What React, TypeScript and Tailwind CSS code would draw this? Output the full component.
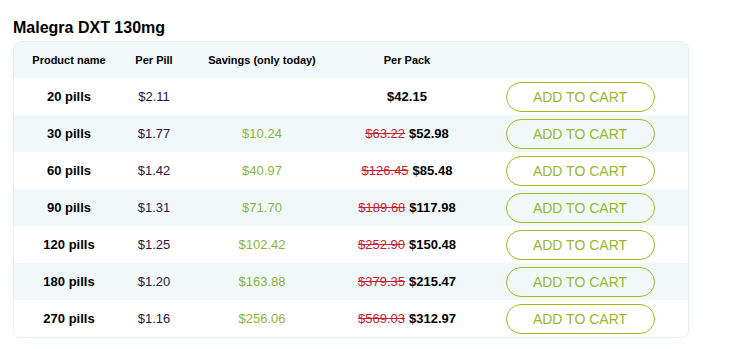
const rows = [
  { name: '20 pills', per: '$2.11', save: '', old: '', price: '$42.15' },
  { name: '30 pills', per: '$1.77', save: '$10.24', old: '$63.22', price: '$52.98' },
  { name: '60 pills', per: '$1.42', save: '$40.97', old: '$126.45', price: '$85.48' },
  { name: '90 pills', per: '$1.31', save: '$71.70', old: '$189.68', price: '$117.98' },
  { name: '120 pills', per: '$1.25', save: '$102.42', old: '$252.90', price: '$150.48' },
  { name: '180 pills', per: '$1.20', save: '$163.88', old: '$379.35', price: '$215.47' },
  { name: '270 pills', per: '$1.16', save: '$256.06', old: '$569.03', price: '$312.97' },
];

export default function App() {
  return (
    <div className="w-[739px] h-[349px] bg-white px-[13px] pt-[17px] font-['Liberation_Sans',Arial,sans-serif]">
      <h1 className="text-[16px] font-bold leading-[22px] text-black mb-[2px]">Malegra DXT 130mg</h1>
      <div className="w-[676px] rounded-[8px] border border-[#e6eef0] overflow-hidden">
        {/* header */}
        <div className="flex h-[36px] items-center bg-[#f1f8fa] text-[11px] font-semibold text-black">
          <div className="w-[110px] text-center">Product name</div>
          <div className="w-[60px] text-center">Per Pill</div>
          <div className="w-[156px] text-center">Savings (only today)</div>
          <div className="w-[134px] text-center">Per Pack</div>
          <div className="flex-1" />
        </div>
        {rows.map((r, i) => (
          <div
            key={r.name}
            className={`flex h-[37px] items-center text-[13px] ${i % 2 === 1 ? 'bg-[#f1f8fa]' : 'bg-white'}`}
          >
            <div className="w-[110px] text-center font-bold text-black">{r.name}</div>
            <div className="w-[60px] text-center text-[#2a1540]">{r.per}</div>
            <div className="w-[156px] text-center text-[#8cb43a]">{r.save}</div>
            <div className="w-[134px] text-center">
              {r.old && <span className="text-[#c8202f] line-through mr-[4px]">{r.old}</span>}
              <span className="font-bold text-black">{r.price}</span>
            </div>
            <div className="flex-1 flex justify-center pr-[2px]">
              <button className="w-[149px] h-[30px] rounded-[15px] border border-[#9cbd1c] text-[#96b82a] text-[14px] leading-none bg-transparent">
                ADD TO CART
              </button>
            </div>
          </div>
        ))}
      </div>
    </div>
  );
}
